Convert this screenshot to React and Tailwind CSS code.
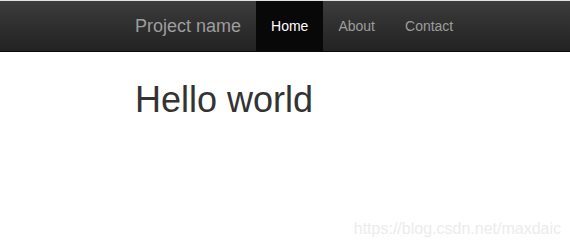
import React from 'react'

const links = [
  { label: 'Home', active: true },
  { label: 'About' },
  { label: 'Contact' },
]

const App = () => {
  return (
    <div className="relative h-[249px] w-[570px] overflow-hidden bg-white font-['Liberation_Sans',Arial,sans-serif]">
      <div className="h-px bg-[#e2e2e2]" />
      <nav className="h-[51px] border-b border-[#080808] bg-gradient-to-b from-[#3c3c3c] to-[#222222]">
        <div className="flex h-full pl-[135px]">
          <a className="flex items-center pr-[15px] text-[18px] text-[#9d9d9d]">Project name</a>
          {links.map((l) => (
            <a
              key={l.label}
              className={`flex items-center px-[15px] text-[14px] ${
                l.active ? 'bg-[#080808] text-white' : 'text-[#9d9d9d]'
              }`}
            >
              {l.label}
            </a>
          ))}
        </div>
      </nav>
      <div className="pl-[135px] pt-[28px]">
        <h1 className="text-[36px] leading-[40px] text-[#333333]">Hello world</h1>
      </div>
      <div className="absolute bottom-[12px] right-[9px] text-[16px] leading-[16px] text-[#ececec]">
        https://blog.csdn.net/maxdaic
      </div>
    </div>
  )
}

export default App
